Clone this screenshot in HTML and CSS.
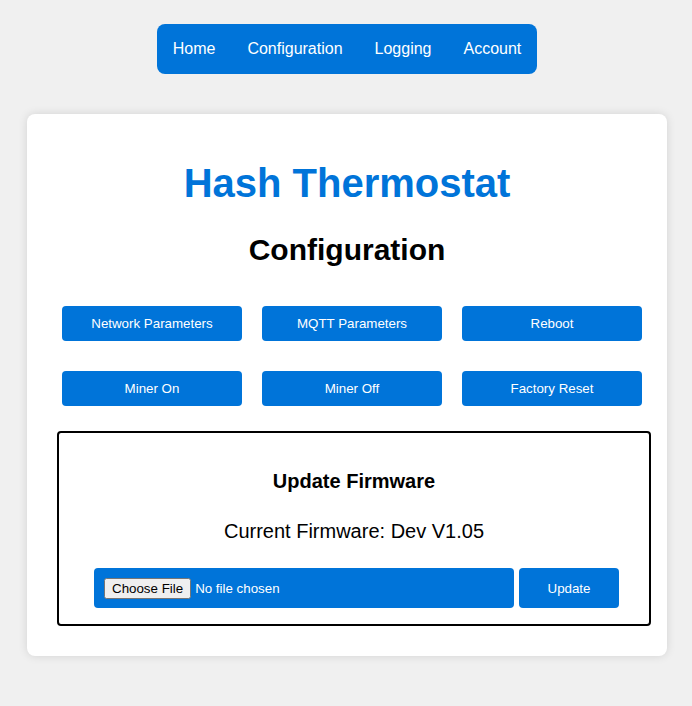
FILE: index.html
```html
<!DOCTYPE html>
<html>
<head>
<meta charset="utf-8">
<link rel="stylesheet" href="styles.css">
</head>
<body>
<nav class="nav">
  <a href="#" class="nav-link">Home</a>
  <a href="#" class="nav-link">Configuration</a>
  <a href="#" class="nav-link">Logging</a>
  <a href="#" class="nav-link">Account</a>
</nav>
<main class="card">
  <h1 class="title">Hash Thermostat</h1>
  <h2 class="subtitle">Configuration</h2>
  <div class="actions">
    <button class="btn">Network Parameters</button>
    <button class="btn">MQTT Parameters</button>
    <button class="btn">Reboot</button>
    <button class="btn">Miner On</button>
    <button class="btn">Miner Off</button>
    <button class="btn">Factory Reset</button>
  </div>
  <section class="firmware">
    <h3 class="fw-title">Update Firmware</h3>
    <p class="fw-current">Current Firmware: Dev V1.05</p>
    <form class="fw-form">
      <input type="file" class="fw-file">
      <button type="button" class="btn fw-update">Update</button>
    </form>
  </section>
</main>
</body>
</html>
```
FILE: styles.css
```css
html, body {
  margin: 0;
}
body {
  background: #f0f0f0;
  font-family: "Liberation Sans", Arial, sans-serif;
  padding: 24px 0 50px 2px;
}
.nav {
  display: flex;
  width: fit-content;
  margin: 0 auto;
  background: #0074d9;
  border-radius: 8px;
}
.nav-link {
  display: block;
  padding: 16px;
  font-size: 16px;
  line-height: 18px;
  color: #ffffff;
  text-decoration: none;
}
.card {
  box-sizing: border-box;
  width: 640px;
  height: 542px;
  margin: 40px auto 0;
  background: #ffffff;
  border-radius: 8px;
  box-shadow: 0 0 10px rgba(0, 0, 0, 0.12);
  padding: 46px 0 30px;
}
.title {
  margin: 0;
  text-align: center;
  font-size: 40px;
  line-height: 46px;
  font-weight: bold;
  color: #0074d9;
}
.subtitle {
  margin: 27px 0 0;
  text-align: center;
  font-size: 30px;
  line-height: 34px;
  font-weight: bold;
  color: #000000;
}
.actions {
  display: grid;
  grid-template-columns: repeat(3, 180px);
  grid-auto-rows: 35px;
  column-gap: 20px;
  row-gap: 30px;
  margin: 39px 0 0 35px;
}
.btn {
  border: none;
  border-radius: 4px;
  background: #0074d9;
  color: #ffffff;
  font-family: "Liberation Sans", Arial, sans-serif;
  font-size: 13.333px;
  padding: 0;
  cursor: pointer;
}
.firmware {
  box-sizing: border-box;
  width: 594px;
  height: 195px;
  margin: 25px 0 0 30px;
  border: 2px solid #000000;
  border-radius: 4px;
  padding: 36px 0 0 5px;
  text-align: center;
}
.fw-title {
  margin: 0;
  font-size: 20px;
  line-height: 24px;
  font-weight: bold;
  padding-right: 5px;
}
.fw-current {
  margin: 26px 0 0;
  font-size: 20px;
  line-height: 24px;
  padding-right: 5px;
}
.fw-form {
  display: flex;
  justify-content: center;
  gap: 5px;
  margin-top: 25px;
}
.fw-file {
  box-sizing: border-box;
  width: 420px;
  height: 40px;
  padding: 10px 10px 0;
  background: #0074d9;
  color: #ffffff;
  border-radius: 4px;
  font-family: "Liberation Sans", Arial, sans-serif;
  font-size: 13.333px;
}
.fw-update {
  width: 100px;
  height: 40px;
}
```
